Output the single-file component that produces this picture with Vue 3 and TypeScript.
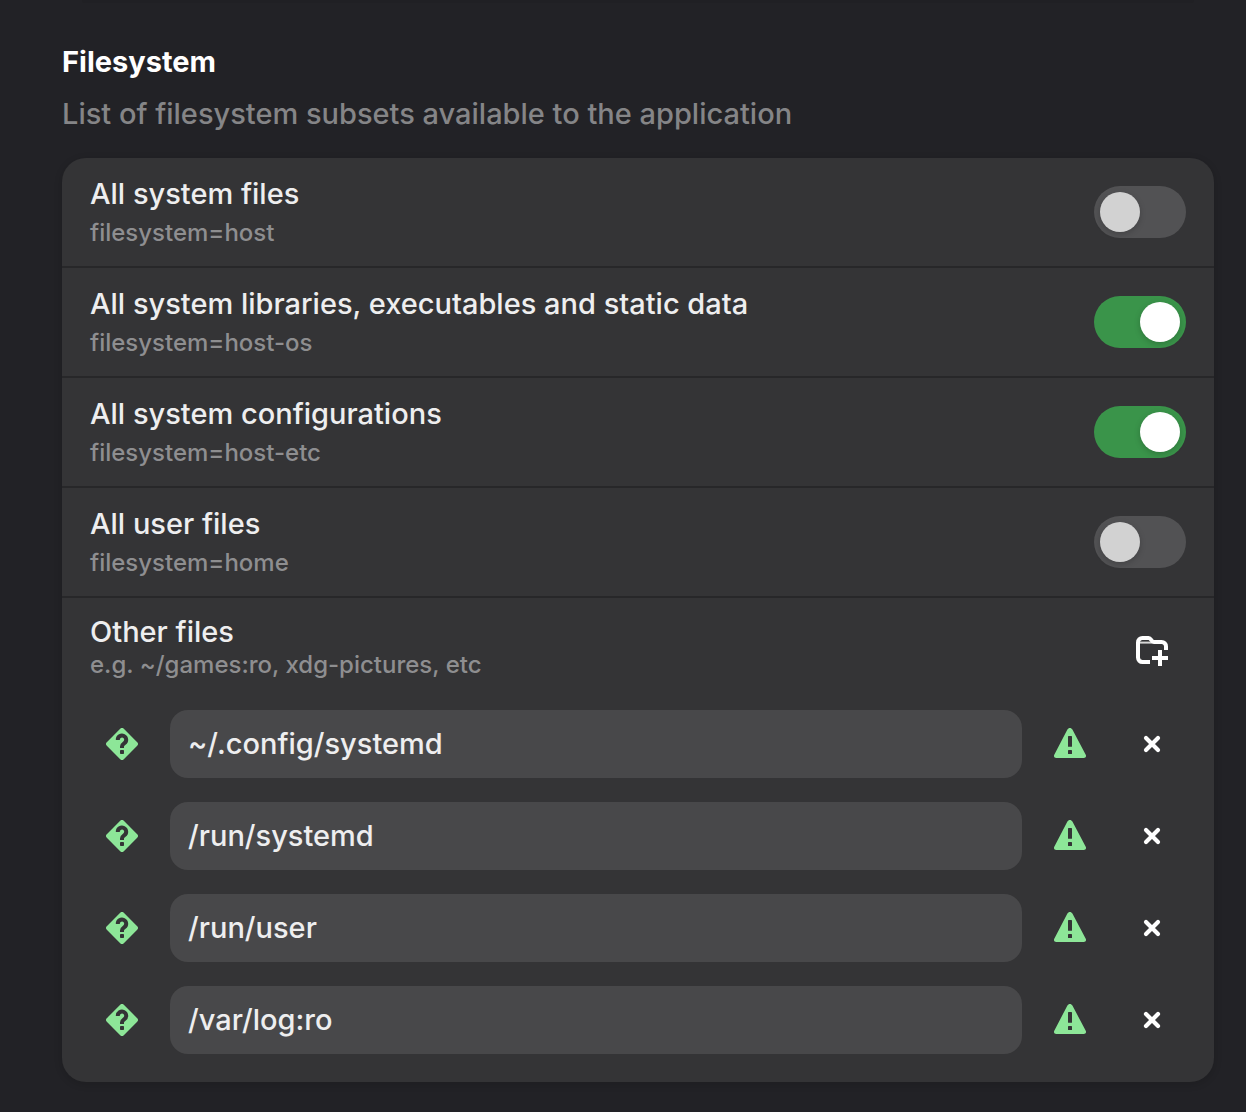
<script setup lang="ts">
import { ref } from 'vue'

interface Permission {
  id: string
  title: string
  flag: string
  enabled: boolean
}

interface PathEntry {
  id: number
  value: string
}

const permissions = ref<Permission[]>([
  { id: 'host', title: 'All system files', flag: 'filesystem=host', enabled: false },
  { id: 'host-os', title: 'All system libraries, executables and static data', flag: 'filesystem=host-os', enabled: true },
  { id: 'host-etc', title: 'All system configurations', flag: 'filesystem=host-etc', enabled: true },
  { id: 'home', title: 'All user files', flag: 'filesystem=home', enabled: false },
])

const paths = ref<PathEntry[]>([
  { id: 1, value: '~/.config/systemd' },
  { id: 2, value: '/run/systemd' },
  { id: 3, value: '/run/user' },
  { id: 4, value: '/var/log:ro' },
])

let nextId = 5

function addPath(): void {
  paths.value.push({ id: nextId++, value: '' })
}

function removePath(id: number): void {
  paths.value = paths.value.filter((entry) => entry.id !== id)
}
</script>

<template>
  <main class="page">
    <div class="previous-edge"></div>
    <section class="group">
      <h2 class="heading">Filesystem</h2>
      <p class="description">List of filesystem subsets available to the application</p>

      <div class="card">
        <label v-for="item in permissions" :key="item.id" class="row" :for="item.id">
          <span class="labels">
            <span class="title">{{ item.title }}</span>
            <span class="subtitle">{{ item.flag }}</span>
          </span>
          <input :id="item.id" v-model="item.enabled" class="switch" type="checkbox" role="switch" />
        </label>

        <div class="others">
          <div class="others-head">
            <div class="labels compact">
              <span id="others-title" class="title">Other files</span>
              <span class="subtitle">e.g. ~/games:ro, xdg-pictures, etc</span>
            </div>
            <button class="icon-button tall" type="button" aria-label="Add path" @click="addPath">
              <svg class="icon" viewBox="0 0 16 16" fill="none" stroke="currentColor" stroke-width="2">
                <path d="M7 14H3.2A2.2 2.2 0 0 1 1 11.8V4.2A2.2 2.2 0 0 1 3.2 2H6.3C7.6 2 7.6 4 9 4H12.8A2.2 2.2 0 0 1 15 6.2V8" />
                <path d="M2 4.3H9" stroke-width="1" opacity="0.8" />
                <path d="M12 8V16M8 12H16" />
              </svg>
            </button>
          </div>

          <ul class="paths">
            <li v-for="entry in paths" :key="entry.id" class="path">
              <button class="icon-button green" type="button" aria-label="Path status">
                <svg class="icon" viewBox="0 0 16 16">
                  <path fill="currentColor" d="M7.1.4 .4 7.1a1.27 1.27 0 0 0 0 1.8L7.1 15.6a1.27 1.27 0 0 0 1.8 0L15.6 8.9a1.27 1.27 0 0 0 0-1.8L8.9.4a1.27 1.27 0 0 0-1.8 0z" />
                  <path class="cut-line" d="M5.9 6A2.1 2.1 0 1 1 9.2 7.6C8.4 8.2 8 8.5 8 9.2V10" />
                  <rect class="cut" x="7" y="11" width="2" height="2" rx="0.4" />
                </svg>
              </button>
              <input v-model="entry.value" class="entry" type="text" spellcheck="false" aria-labelledby="others-title" />
              <button class="icon-button green" type="button" aria-label="Changed by user">
                <svg class="icon" viewBox="0 0 16 16">
                  <path fill="currentColor" d="M7.9 0C8.5 0 8.9.3 9.2.8L15.8 13.2C16.3 14.1 15.9 15 14.9 15H1.1C.1 15-.3 14.1.2 13.2L6.7.8C7 .3 7.4 0 7.9 0z" />
                  <rect class="cut" x="7" y="4" width="2" height="5.4" rx="0.3" />
                  <rect class="cut" x="7" y="11" width="2" height="2" rx="0.3" />
                </svg>
              </button>
              <button class="icon-button" type="button" aria-label="Remove path" @click="removePath(entry.id)">
                <svg class="icon" viewBox="0 0 16 16" fill="none" stroke="currentColor" stroke-width="2.1" stroke-linecap="round">
                  <path d="M5 5L11 11M11 5L5 11" />
                </svg>
              </button>
            </li>
          </ul>
        </div>
      </div>
    </section>
  </main>
</template>

<style>
body {
  margin: 0;
  background: #222226;
}
</style>

<style scoped>
.page {
  box-sizing: border-box;
  padding: 0 32px 30px 62px;
  font-family: Inter, "Noto Sans", sans-serif;
  font-size: 29px;
  font-weight: 500;
  line-height: 36px;
  color: #eeeeef;
}

.previous-edge {
  height: 3px;
  margin: 0 20px;
  background: #202024;
  border-radius: 0 0 20px 20px;
}

.group {
  padding-top: 41px;
}

.heading {
  margin: 0;
  font-size: 29px;
  font-weight: 700;
  color: #ffffff;
}

.description {
  margin: 16px 0 26px;
  color: #858587;
}

.card {
  overflow: hidden;
  border-radius: 24px;
  background: #343436;
  box-shadow: 0 2px 6px 2px rgba(0, 0, 0, 0.1);
}

.row {
  display: flex;
  align-items: center;
  justify-content: space-between;
  padding: 18px 28px;
  border-bottom: 2px solid #272729;
}

.labels {
  display: flex;
  flex-direction: column;
  gap: 6px;
}

.compact {
  gap: 0;
}

.subtitle {
  font-size: 24px;
  line-height: 30px;
  color: #8e8e90;
}

.switch {
  appearance: none;
  box-sizing: border-box;
  display: flex;
  flex: none;
  width: 92px;
  height: 52px;
  margin: 0;
  padding: 6px;
  border-radius: 26px;
  background: #525254;
}

.switch::before {
  content: "";
  width: 40px;
  height: 40px;
  border-radius: 50%;
  background: #d2d2d2;
  box-shadow: 0 2px 6px rgba(0, 0, 0, 0.2);
}

.switch:checked {
  justify-content: flex-end;
  background: #3a944a;
}

.switch:checked::before {
  background: #ffffff;
}

.others {
  padding: 16px 28px 28px 26px;
}

.others-head {
  display: flex;
  align-items: flex-start;
  justify-content: space-between;
  padding-left: 2px;
}

.paths {
  display: flex;
  flex-direction: column;
  gap: 24px;
  margin: 24px 0 0;
  padding: 0;
  list-style: none;
}

.path {
  display: flex;
  gap: 14px;
}

.icon-button {
  display: flex;
  flex: none;
  align-items: center;
  justify-content: center;
  width: 68px;
  height: 68px;
  padding: 0;
  border: 0;
  border-radius: 16px;
  background: none;
  color: #ffffff;
}

.tall {
  height: 72px;
}

.green {
  color: #8de698;
}

.icon {
  width: 32px;
  height: 32px;
}

.cut {
  fill: #343436;
}

.cut-line {
  fill: none;
  stroke: #343436;
  stroke-width: 2;
}

.entry {
  box-sizing: border-box;
  flex: 1;
  min-width: 0;
  height: 68px;
  padding: 0 18px 2px;
  border: 0;
  border-radius: 18px;
  background: #48484a;
  color: #eeeeef;
  font: inherit;
}
</style>
